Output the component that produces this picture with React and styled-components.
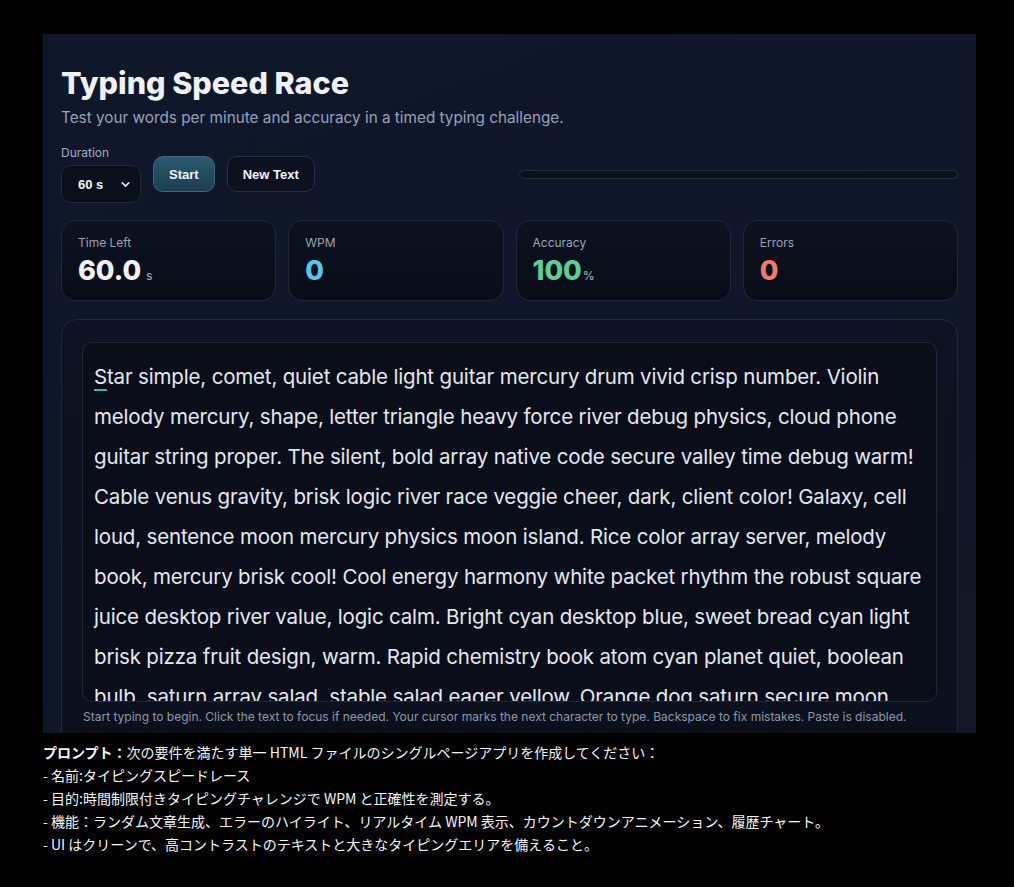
import styled, { createGlobalStyle } from 'styled-components';
import { ChevronDown } from 'lucide-react';

const Global = createGlobalStyle`
  html, body { margin: 0; padding: 0; background: #000; }
  body { font-family: Inter, "Noto Sans", sans-serif; }
  * { box-sizing: border-box; }
`;

const Page = styled.div`
  padding: 34px 38px 0 43px;
  min-height: 887px;
  background: #000;
`;

const Panel = styled.main`
  width: 933px;
  height: 699px;
  overflow: hidden;
  padding: 31px 18px 0 18px;
  background: linear-gradient(160deg, #0f172b 0%, #0f1628 60%, #111827 100%);
`;

const Title = styled.h1`
  margin: 0;
  font-size: 30.5px;
  font-weight: 800;
  color: #eef1f6;
  line-height: 36px;
`;

const Subtitle = styled.p`
  margin: 7px 0 0;
  font-size: 15.3px;
  color: #94a3b8;
  line-height: 20px;
`;

const Controls = styled.div`
  display: flex;
  align-items: center;
  gap: 12px;
  margin-top: 17px;
`;

const Field = styled.label`
  display: flex;
  flex-direction: column;
  gap: 5px;
  font-size: 12px;
  color: #a3adbd;
`;

const SelectWrap = styled.div`
  position: relative;
  width: 80px;
  height: 38px;
  svg {
    position: absolute;
    right: 9px;
    top: 13px;
    color: #e5e7eb;
    pointer-events: none;
  }
`;

const Select = styled.select`
  appearance: none;
  width: 100%;
  height: 100%;
  padding: 0 0 0 16px;
  border-radius: 10px;
  border: 1px solid #1f2838;
  background: #0a0f1c;
  color: #f1f5f9;
  font-family: "Liberation Sans", Arial, sans-serif;
  font-weight: 700;
  font-size: 13px;
`;

const Button = styled.button`
  height: 36px;
  padding: 0 15px;
  border-radius: 10px;
  font-family: "Liberation Sans", Arial, sans-serif;
  font-weight: 700;
  font-size: 13px;
  color: #f1f5f9;
  border: 1px solid ${p => (p.$primary ? '#356b7c' : '#273043')};
  background: ${p =>
    p.$primary ? 'linear-gradient(180deg, #2b5a6c 0%, #1b3f4f 100%)' : '#0c1120'};
  cursor: pointer;
`;

const Progress = styled.div`
  flex: 1;
  max-width: 439px;
  margin-left: auto;
  height: 9px;
  border-radius: 999px;
  background: #0b101d;
  border: 1px solid #232c3c;
`;

const Stats = styled.div`
  display: grid;
  grid-template-columns: repeat(4, 1fr);
  gap: 12px;
  margin-top: 17px;
`;

const StatCard = styled.div`
  height: 81px;
  padding: 15px 16px;
  border-radius: 14px;
  border: 1px solid #1f2839;
  background: linear-gradient(180deg, #0c1221 0%, #090d18 100%);
`;

const StatLabel = styled.div`
  font-size: 12px;
  color: #9aa4b5;
  line-height: 14px;
`;

const StatValue = styled.div`
  margin-top: 6px;
  display: flex;
  align-items: baseline;
  gap: 5px;
  font-size: 27px;
  font-weight: 800;
  line-height: 30px;
  color: ${p => p.$color};
`;

const Unit = styled.span`
  font-size: 12px;
  font-weight: 500;
  color: #9aa4b5;
  margin-left: ${p => (p.$tight ? '-4px' : '0')};
`;

const TypingCard = styled.section`
  margin-top: 18px;
  padding: 22px 20px 20px;
  border-radius: 16px;
  border: 1px solid #1f2839;
  background: linear-gradient(180deg, #0d1322 0%, #0b101d 100%);
`;

const TextBox = styled.div`
  height: 360px;
  overflow: hidden;
  padding: 14px 11px;
  border-radius: 10px;
  border: 1px solid #1f2737;
  background: #0a0e19;
  font-size: 20.5px;
  letter-spacing: -0.17px;
  line-height: 40px;
  color: #e3e8f0;
`;

const TextLine = styled.span`
  display: block;
  white-space: nowrap;
`;

const Cursor = styled.span`
  border-bottom: 2px solid #3bb8a5;
`;

const Hint = styled.p`
  margin: 7px 0 0;
  padding-left: 1px;
  font-size: 12px;
  color: #8f98a8;
`;

const Prompt = styled.div`
  padding: 8px 0 20px;
  font-family: "Noto Sans CJK JP", sans-serif;
  font-size: 14px;
  line-height: 23px;
  color: #f5f5f5;
  b { font-weight: 700; }
`;

const lines = [
  'tar simple, comet, quiet cable light guitar mercury drum vivid crisp number. Violin',
  'melody mercury, shape, letter triangle heavy force river debug physics, cloud phone',
  'guitar string proper. The silent, bold array native code secure valley time debug warm!',
  'Cable venus gravity, brisk logic river race veggie cheer, dark, client color! Galaxy, cell',
  'loud, sentence moon mercury physics moon island. Rice color array server, melody',
  'book, mercury brisk cool! Cool energy harmony white packet rhythm the robust square',
  'juice desktop river value, logic calm. Bright cyan desktop blue, sweet bread cyan light',
  'brisk pizza fruit design, warm. Rapid chemistry book atom cyan planet quiet, boolean',
  'bulb, saturn array salad, stable salad eager yellow. Orange dog saturn secure moon',
];

const stats = [
  { label: 'Time Left', value: '60.0', unit: 's', color: '#eef1f6' },
  { label: 'WPM', value: '0', color: '#56c6ea' },
  { label: 'Accuracy', value: '100', unit: '%', tight: true, color: '#5ccf95' },
  { label: 'Errors', value: '0', color: '#ef7a6d' },
];

export default function App() {
  return (
    <Page>
      <Global />
      <Panel>
        <Title>Typing Speed Race</Title>
        <Subtitle>Test your words per minute and accuracy in a timed typing challenge.</Subtitle>
        <Controls>
          <Field>
            Duration
            <SelectWrap>
              <Select defaultValue="60">
                <option value="30">30 s</option>
                <option value="60">60 s</option>
                <option value="120">120 s</option>
              </Select>
              <ChevronDown size={13} strokeWidth={3} />
            </SelectWrap>
          </Field>
          <Button $primary>Start</Button>
          <Button>New Text</Button>
          <Progress />
        </Controls>
        <Stats>
          {stats.map(s => (
            <StatCard key={s.label}>
              <StatLabel>{s.label}</StatLabel>
              <StatValue $color={s.color}>
                {s.value}
                {s.unit && <Unit $tight={s.tight}>{s.unit}</Unit>}
              </StatValue>
            </StatCard>
          ))}
        </Stats>
        <TypingCard>
          <TextBox>
            {lines.map((l, i) => (
              <TextLine key={i}>
                {i === 0 && <Cursor>S</Cursor>}
                {l}
              </TextLine>
            ))}
          </TextBox>
          <Hint>
            Start typing to begin. Click the text to focus if needed. Your cursor marks the next character to type. Backspace to fix mistakes. Paste is disabled.
          </Hint>
        </TypingCard>
      </Panel>
      <Prompt>
        <b>プロンプト：</b>次の要件を満たす単一 HTML ファイルのシングルページアプリを作成してください：<br />
        - 名前:タイピングスピードレース<br />
        - 目的:時間制限付きタイピングチャレンジで WPM と正確性を測定する。<br />
        - 機能：ランダム文章生成、エラーのハイライト、リアルタイム WPM 表示、カウントダウンアニメーション、履歴チャート。<br />
        - UI はクリーンで、高コントラストのテキストと大きなタイピングエリアを備えること。
      </Prompt>
    </Page>
  );
}
